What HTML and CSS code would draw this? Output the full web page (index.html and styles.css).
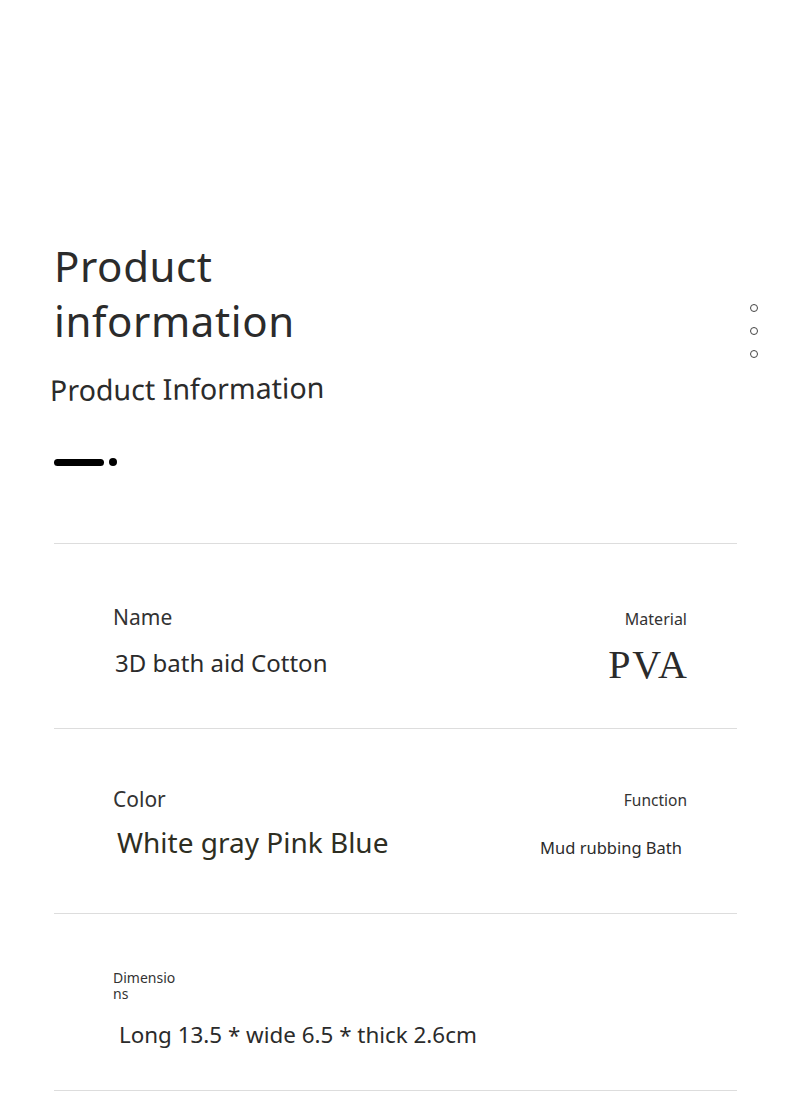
FILE: index.html
```html
<!DOCTYPE html>
<html>
<head>
<meta charset="utf-8">
<link rel="stylesheet" href="styles.css">
</head>
<body>
<div class="page">
  <section class="hero">
    <div class="hero-text">
      <h1 class="title">Product<br>information</h1>
      <div class="subtitle">Product Information</div>
      <div class="marker"><span class="pill"></span><span class="dot"></span></div>
    </div>
    <div class="side-dots">
      <span class="ring"></span>
      <span class="ring"></span>
      <span class="ring"></span>
    </div>
  </section>

  <div class="specs">
    <div class="row">
      <div class="cell left">
        <div class="label">Name</div>
        <div class="value v-name">3D bath aid Cotton</div>
      </div>
      <div class="cell right">
        <div class="label small">Material</div>
        <div class="value v-pva">PVA</div>
      </div>
    </div>
    <div class="row">
      <div class="cell left">
        <div class="label l-color">Color</div>
        <div class="value v-color">White gray Pink Blue</div>
      </div>
      <div class="cell right">
        <div class="label small l-func">Function</div>
        <div class="value v-func">Mud rubbing Bath</div>
      </div>
    </div>
    <div class="row">
      <div class="cell left">
        <div class="label tiny">Dimensions</div>
        <div class="value v-dim">Long 13.5 * wide 6.5 * thick 2.6cm</div>
      </div>
    </div>
  </div>
</div>
</body>
</html>
```

FILE: styles.css
```css
* { box-sizing: border-box; margin: 0; padding: 0; }
body {
  background: #fff;
  font-family: "Noto Sans", "Open Sans", sans-serif;
  color: #333;
  width: 790px;
}
.page {
  padding: 0 53px 0 54px;
}
.hero {
  display: flex;
  justify-content: space-between;
  padding-top: 238px;
  margin-right: -20px;
}
.title {
  font-weight: 400;
  font-size: 42px;
  line-height: 55px;
  letter-spacing: 0.6px;
  color: #2b2b2b;
}
.subtitle {
  margin-top: 24px;
  margin-left: -4px;
  font-size: 28.6px;
  line-height: 36px;
  color: #2b2b2b;
  transform: rotate(-0.6deg);
  transform-origin: left center;
}
.marker {
  display: flex;
  align-items: center;
  gap: 5px;
  margin-top: 50px;
  height: 8px;
}
.pill {
  width: 50px;
  height: 7px;
  border-radius: 4px;
  background: #000;
}
.dot {
  width: 8px;
  height: 8px;
  border-radius: 50%;
  background: #000;
}
.side-dots {
  display: flex;
  flex-direction: column;
  gap: 15px;
  padding-top: 66px;
  margin-right: -1px;
}
.ring {
  width: 8px;
  height: 8px;
  border: 1px solid #444;
  border-radius: 50%;
}
.specs {
  margin-top: 77px;
  border-top: 1px solid #ddd;
}
.row {
  display: flex;
  justify-content: space-between;
  height: 185px;
  border-bottom: 1px solid #ddd;
  padding: 0 50px 0 59px;
}
.row:last-child { height: 177px; }
.cell { display: flex; flex-direction: column; }
.cell.right { align-items: flex-end; text-align: right; }
.label {
  font-size: 21px;
  line-height: 28px;
  margin-top: 59px;
  color: #333;
}
.label.l-color { margin-top: 56px; }
.label.small {
  font-size: 16px;
  line-height: 22px;
  margin-top: 64px;
}
.label.small.l-func { margin-top: 60px; font-size: 15.5px; }
.label.tiny {
  font-size: 14px;
  line-height: 16px;
  width: 66px;
  word-break: break-all;
  margin-top: 56px;
}
.value { color: #2b2b2b; }
.v-name { font-size: 24px; line-height: 32px; margin-top: 16px; margin-left: 2px; }
.v-pva {
  font-family: "Liberation Serif", "Times New Roman", serif;
  font-size: 40px;
  line-height: 46px;
  margin-top: 12px;
  letter-spacing: 2px;
  margin-right: -2px;
}
.v-color { font-size: 28px; line-height: 36px; margin-top: 11px; margin-left: 4px; color: #2e2e22; }
.v-func { font-size: 16.5px; line-height: 22px; margin-top: 26px; margin-right: 5px; }
.v-dim { font-size: 22.4px; line-height: 30px; margin-top: 18px; margin-left: 6px; }
```
